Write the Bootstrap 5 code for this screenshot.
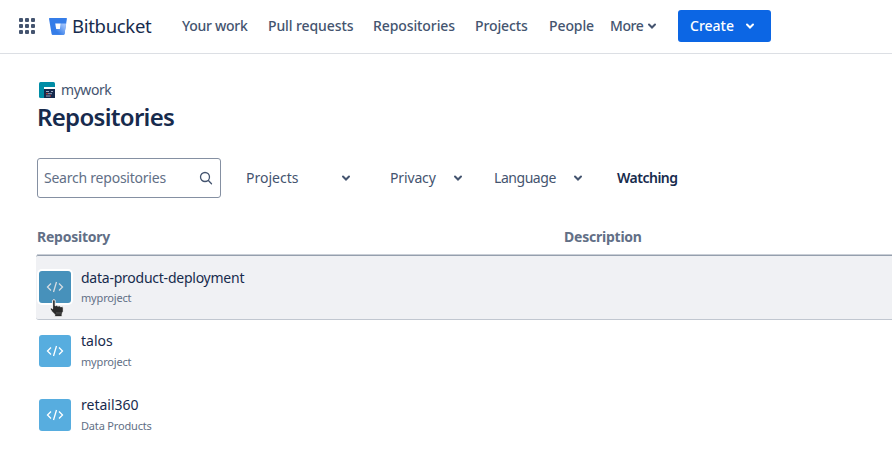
<!DOCTYPE html>
<html lang="en">
<head>
<meta charset="utf-8">
<meta name="viewport" content="width=device-width, initial-scale=1">
<title>Repositories - Bitbucket</title>
<link href="https://cdn.jsdelivr.net/npm/bootstrap@5.3.0/dist/css/bootstrap.min.css" rel="stylesheet">
<style>
body{font-family:"Noto Sans","Open Sans",sans-serif;font-size:14px;line-height:20px;color:#172b4d;overflow:hidden}
svg{display:block;flex:none}
.t{white-space:nowrap}
.topbar{height:54px;border-bottom:1px solid #dcdfe4;padding:0 0 1px 19px}
.brand{margin-left:14px;width:133px;gap:5px;font-size:18.5px;line-height:24px;letter-spacing:-.3px;color:#172b4d}
.mainnav{display:grid;grid-template-columns:86px 105px 102px 74px 61px 68px;color:#44546f;font-weight:500;letter-spacing:-.1px}
.mainnav .tight{letter-spacing:-.28px}
.mainnav .more{letter-spacing:-.4px}
.create{width:93px;height:32px;border-radius:3px;background:#0c66e4;color:#fff;font-size:14px;line-height:18px;font-weight:500;padding:0 15px 1px 11px}
.create:hover{background:#0055cc;color:#fff}
.page{padding:26px 0 0 37px}
.crumb{gap:6px;color:#44546f;padding-left:2px;height:20px;letter-spacing:-.45px}
.title{font-size:24px;line-height:28px;font-weight:600;margin:3px 0 0;color:#172b4d;letter-spacing:-.7px}
.filters{margin-top:27px;color:#44546f}
.search{width:184px;height:40px;border:1px solid #8590a2;border-radius:3px;padding:0 7px 0 6px;color:#626f86;letter-spacing:-.23px}
.f1{width:105px;margin-left:25px}
.f2{width:73px;margin-left:39px;letter-spacing:-.15px}
.f3{width:89px;margin-left:31px;letter-spacing:-.45px}
.watch{margin-left:34px;font-weight:600;color:#172b4d;letter-spacing:-.5px}
.thead-row,.repo{display:grid;grid-template-columns:527px 1fr}
.thead-row{margin-top:29px;height:28px;color:#626f86;font-weight:700;border-bottom:1px solid #c9ced6;letter-spacing:-.23px}
.repo{height:64px;align-items:center;padding-left:2px}
.repo.hot{height:65px;background:#f0f1f4;border-top:1px solid #959fad;border-bottom:1px solid #c1c7d0;border-radius:2px 0 0 3px;margin:0 0 -1px -1px;padding:0 0 1px 3px}
.avatar{width:32px;height:32px;border-radius:3px;background:#57addf;color:#fff;position:relative}
.hot .avatar{background:#4791bb;color:#d5dce2;box-shadow:0 0 0 2px #fff}
.names{margin-left:10px}
.names .n{height:20px;letter-spacing:-.24px}
.names .plain{letter-spacing:0}
.hot .n{padding-top:1px}
.names .s{height:20px;padding-top:1px;font-size:11px;color:#626f86;letter-spacing:-.17px}
.pointer{position:absolute;left:10px;top:28px}
</style>
</head>
<body class="bg-white">
<svg width="0" height="0" class="position-absolute">
<symbol id="chev" viewBox="0 0 10 8"><path d="m2 2.500 3 3 3-3" fill="none" stroke="currentColor" stroke-width="2" stroke-linecap="round"/></symbol>
<symbol id="code" viewBox="0 0 18 12"><path d="M5 2.500 1.500 6 5 9.500M13 2.500 16.500 6 13 9.500M10.500 1 7.500 11" fill="none" stroke="currentColor" stroke-width="1.300"/></symbol>
</svg>
<header class="topbar d-flex align-items-center">
<svg width="16" height="16" fill="#44546f"><g id="r"><rect width="4" height="4" rx="1"/><rect x="6" width="4" height="4" rx="1"/><rect x="12" width="4" height="4" rx="1"/></g><use href="#r" y="6"/><use href="#r" y="12"/></svg>
<div class="brand d-flex align-items-center">
<svg width="18" height="17" viewBox="0 0 18 17"><defs><linearGradient id="g" x1="1" y1=".3" x2=".4" y2=".8"><stop offset="0" stop-color="#9fc2fb"/><stop offset="1" stop-color="#357de8"/></linearGradient></defs><path d="M.6 0h16.800q.6 0 .5.700L15.500 16q-.1.800-.9.800H3.500q-.8 0-.9-.8L0 .7Q0 0 .6 0Z" fill="#357de8"/><path d="M17.200 5.500h-5.300L11 11H7.300L3 16.500q.2.300.6.300h11q.8 0 .9-.8Z" fill="url(#g)"/><path d="M6.200 5.500h5.600l-.9 5.500H7.200Z" fill="#fff"/></svg>
<span class="t">Bitbucket</span></div>
<nav class="mainnav"><span class="t tight">Your work</span><span class="t">Pull requests</span><span class="t">Repositories</span><span class="t">Projects</span><span class="t">People</span><span class="t more d-flex align-items-center">More<svg width="10" height="8" class="ms-1"><use href="#chev"/></svg></span></nav>
<button type="button" class="btn create d-flex align-items-center justify-content-between"><span class="t">Create</span><svg width="10" height="8"><use href="#chev"/></svg></button>
</header>
<main class="page">
<div class="crumb d-flex align-items-center">
<svg width="16" height="16"><rect width="16" height="16" rx="1.500" fill="#008da6"/><path d="M5 6h11v10H5z" fill="#172b4d"/><path d="M5 5h11v2H5z" fill="#fff"/><path d="M7 9.500h3m2 0h2M9 11.700h4M7 14h4" stroke="#9aa8c0"/><path d="M7 11.800h2m2 2.200h1" stroke="#e34935"/></svg><span class="t">mywork</span></div>
<h1 class="title">Repositories</h1>
<div class="filters d-flex align-items-center">
<div class="search d-flex align-items-center justify-content-between"><span class="t">Search repositories</span><svg width="14" height="14" fill="none" stroke="#44546f" stroke-width="1.300" stroke-linecap="round"><circle cx="6" cy="6" r="4.500"/><path d="m9.400 9.500 3.100 3.200"/></svg></div>
<div class="f1 d-flex align-items-center justify-content-between"><span class="t">Projects</span><svg width="10" height="8"><use href="#chev"/></svg></div>
<div class="f2 d-flex align-items-center justify-content-between"><span class="t">Privacy</span><svg width="10" height="8"><use href="#chev"/></svg></div>
<div class="f3 d-flex align-items-center justify-content-between"><span class="t">Language</span><svg width="10" height="8"><use href="#chev"/></svg></div>
<span class="t watch">Watching</span></div>
<div class="thead-row"><div>Repository</div><div>Description</div></div>
<div class="repo hot"><div class="d-flex align-items-center"><div class="avatar d-flex align-items-center justify-content-center"><svg width="18" height="12"><use href="#code"/></svg>
<svg class="pointer" width="18" height="19" viewBox="0 0 18 19"><path d="M3.600 2q0-1.400 1.300-1.400T6.200 2v4.800l1.400-.5 1.300.8 1.500-.3 1.200.9 1.600-.1 1.100 1.200v3.500l-1.200 2.700v2.700H5.700v-2.300L3 12.700 1 10q.3-1.600 1.600-.9l1 .800Z" fill="#2b2b2b" stroke="#fff" stroke-width=".9"/><path d="M8 13v2.500m2-2.500v2.500m2-2.500v2.500" stroke="#777" stroke-width=".6"/></svg></div><div class="names"><div class="n t">data-product-deployment</div><div class="s t">myproject</div></div></div></div>
<div class="repo"><div class="d-flex align-items-center"><div class="avatar d-flex align-items-center justify-content-center"><svg width="18" height="12"><use href="#code"/></svg></div><div class="names"><div class="n plain t">talos</div><div class="s t">myproject</div></div></div></div>
<div class="repo"><div class="d-flex align-items-center"><div class="avatar d-flex align-items-center justify-content-center"><svg width="18" height="12"><use href="#code"/></svg></div><div class="names"><div class="n plain t">retail360</div><div class="s t">Data Products</div></div></div></div>
</main>
<script src="https://cdn.jsdelivr.net/npm/bootstrap@5.3.0/dist/js/bootstrap.bundle.min.js"></script>
</body>
</html>
